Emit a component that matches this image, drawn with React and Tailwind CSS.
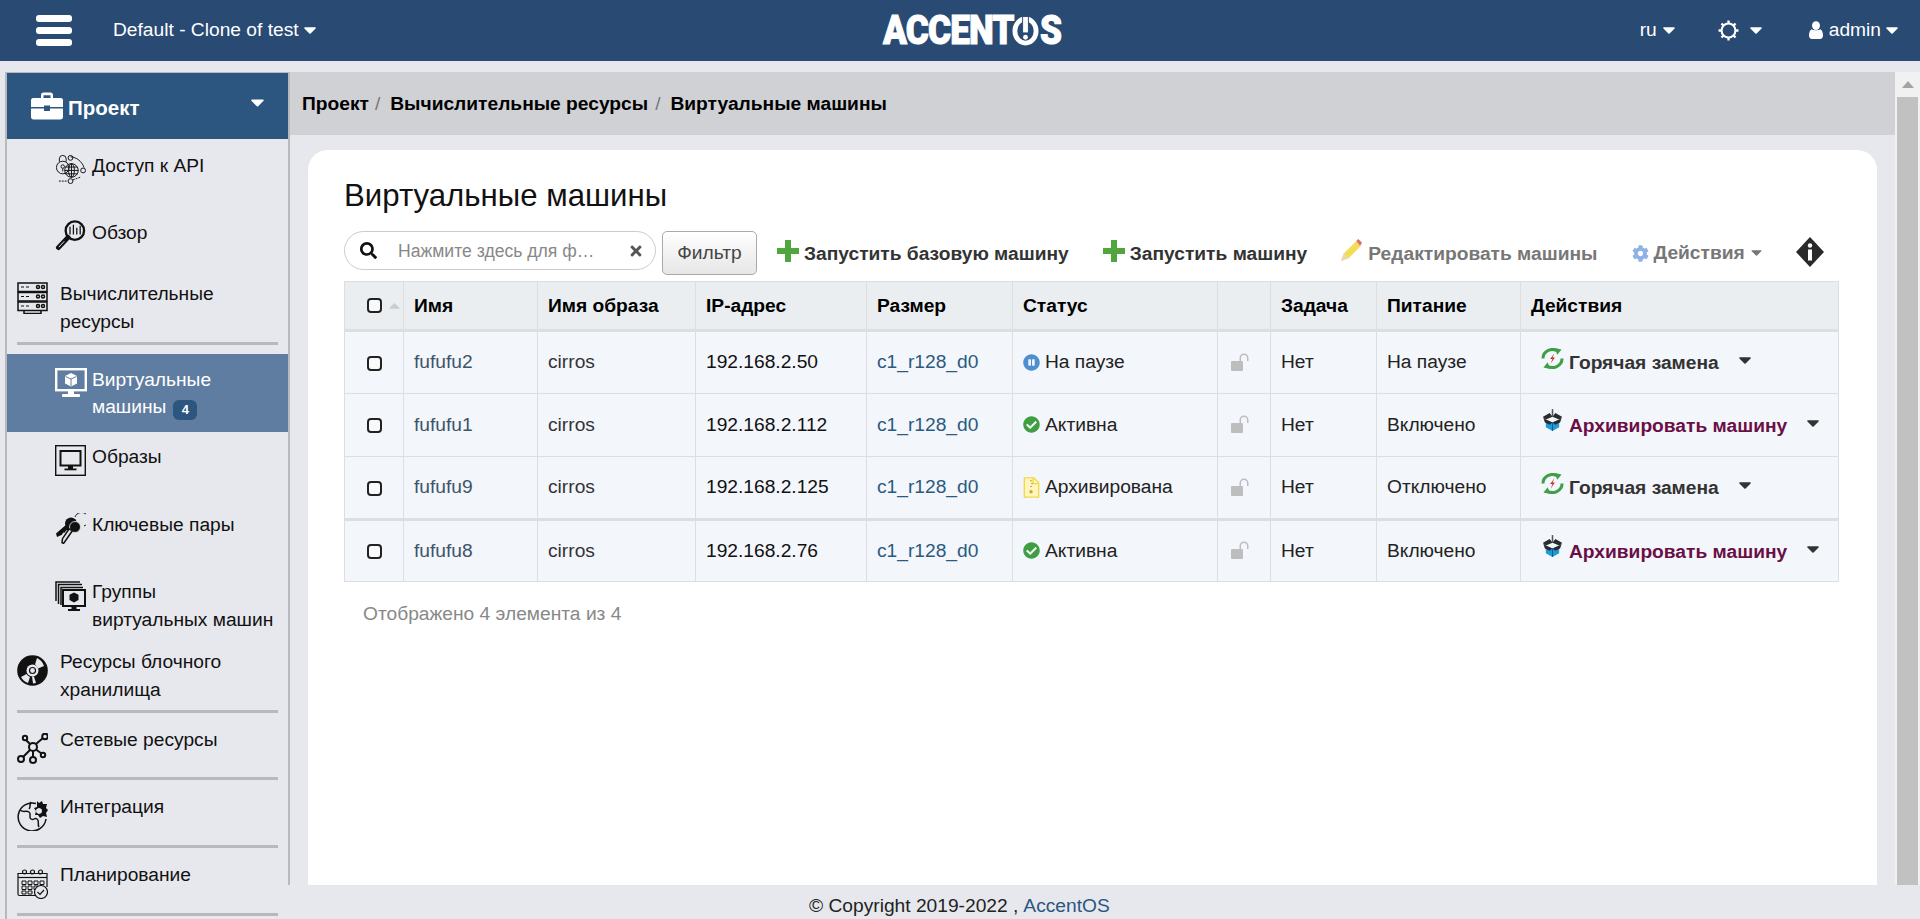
import React from "react";
import {
  FaSearch,
  FaTimes,
  FaCog,
  FaCheckCircle,
  FaPauseCircle,
} from "react-icons/fa";

const Caret = ({ className = "" }) => (
  <svg viewBox="0 0 12 7" className={className} fill="currentColor">
    <path d="M1 0.2h10c.8 0 1.1.8.6 1.3L6.6 6.5c-.3.3-.9.3-1.2 0L.4 1.5C-.1 1 .2.2 1 .2z" />
  </svg>
);

const HeaderGear = () => (
  <svg viewBox="0 0 20 20" className="w-[21px] h-[21px]" fill="none" stroke="white">
    <circle cx="10" cy="10" r="6.6" strokeWidth="2" />
    <g strokeWidth="2.2">
      <path d="M10 0.5v3M10 16.5v3M0.5 10h3M16.5 10h3M3.3 3.3l2 2M14.7 14.7l2 2M3.3 16.7l2-2M14.7 5.3l2-2" />
    </g>
  </svg>
);

const UserIcon = () => (
  <svg viewBox="0 0 14 18" className="w-[14px] h-[18px]" fill="white">
    <ellipse cx="7" cy="4.6" rx="4" ry="4.4" />
    <path d="M2.8 8.2C4 9.6 10 9.6 11.2 8.2 13 9 14 11 14 14.500c0 2-1.200 3.500-3 3.500H3c-1.800 0-3-1.500-3-3.500C0 11 1 9 2.800 8.200z" />
  </svg>
);

const Logo = () => (
  <div className="flex items-center w-[180px] h-[30px] text-white font-['Roboto',sans-serif] font-black text-[40px] leading-none tracking-[-1px] [-webkit-text-stroke:1px_white]">
    <span className="inline-block origin-left scale-x-[0.88] w-[129px] whitespace-nowrap">ACCENT</span>
    <svg viewBox="0 0 28 30" className="w-[27px] h-[30px] shrink-0" fill="none">
      <ellipse cx="14" cy="15" rx="11" ry="12.500" stroke="white" strokeWidth="5" />
      <rect x="11" y="0" width="6" height="17" fill="white" stroke="#284a73" strokeWidth="1" />
      <circle cx="14" cy="21.500" r="2.500" fill="white" />
    </svg>
    <span className="inline-block ml-[1px] origin-left scale-x-[0.88] w-[21px] whitespace-nowrap">S</span>
  </div>
);

const Briefcase = () => (
  <svg viewBox="0 0 32 28" className="w-[32px] h-[28px]" fill="white">
    <path d="M10 6V3c0-1.500 1-2.500 2.500-2.500h7C21 .5 22 1.500 22 3v3h-2.500V3.200h-7V6z" />
    <path d="M2 6h28c1 0 2 1 2 2v7H19v-1.500h-6V15H0V8c0-1 1-2 2-2z" />
    <path d="M0 16.500h13V19h6v-2.500h13V25c0 1.500-1 2.500-2.500 2.500h-27C1 27.500 0 26.500 0 25z" />
  </svg>
);

const ApiIcon = () => (
  <svg viewBox="0 0 32 32" className="w-[31px] h-[31px]" fill="none" stroke="#111" strokeWidth="1">
    <circle cx="8" cy="15" r="6.500" />
    <path d="M4.500 9V6a3.500 3.500 0 0 1 7 0v3" />
    <circle cx="8" cy="14" r="1.800" />
    <path d="M8 16v3" />
    <circle cx="17" cy="18" r="7" />
    <ellipse cx="17" cy="18" rx="3" ry="7" />
    <path d="M10 18h14M11 14.500h12M11 21.500h12M17 11v14" />
    <path d="M16 4c6 0 12 5 14 11" />
    <circle cx="16" cy="5" r="2.500" />
    <circle cx="29" cy="18" r="2.500" />
    <circle cx="16" cy="29" r="2.500" />
    <path d="M4 29h9M26 25l-8 3" strokeDasharray="2 1" />
  </svg>
);

const ReviewIcon = () => (
  <svg viewBox="0 0 31 32" className="w-[31px] h-[31px]" fill="none" stroke="#111">
    <circle cx="20" cy="11" r="9.500" strokeWidth="2.400" />
    <path d="M15 7v8M18.500 5v10M22 8v7M25.500 6v9" strokeWidth="1.300" />
    <path d="M13 18L3 28.500" strokeWidth="5" strokeLinecap="round" />
    <path d="M9 22L3.500 28" stroke="#e7e8ed" strokeWidth="1" />
  </svg>
);

const ServerIcon = () => (
  <svg viewBox="0 0 31 32" className="w-[31px] h-[32px]" fill="none" stroke="#111" strokeWidth="1.500">
    <rect x="1" y="1" width="29" height="8.500" />
    <rect x="1" y="10.500" width="29" height="8.500" />
    <rect x="1" y="20" width="29" height="8.500" />
    <path d="M4 5h3M9 5h3M4 14.500h3M9 14.500h3M4 24h3M9 24h3" strokeWidth="1" />
    <circle cx="21" cy="5" r="1.500" />
    <circle cx="26" cy="5" r="1.500" />
    <circle cx="21" cy="14.500" r="1.500" />
    <circle cx="26" cy="14.500" r="1.500" />
    <circle cx="21" cy="24" r="1.500" />
    <circle cx="26" cy="24" r="1.500" />
    <path d="M7 28.500v3h17v-3" />
  </svg>
);

const VmIcon = () => (
  <svg viewBox="0 0 32 30" className="w-[32px] h-[30px]" fill="none">
    <rect x="1.200" y="1.200" width="29.600" height="21" stroke="white" strokeWidth="2.400" />
    <path d="M16 5l6 3v7.500l-6 3-6-3V8z" fill="white" />
    <path d="M10.500 8.500L16 11l5.500-2.500M16 11v7" stroke="#5f7da0" strokeWidth="1" />
    <rect x="13" y="23" width="6" height="3" fill="white" />
    <rect x="7" y="26" width="18" height="3" rx="1" fill="white" />
  </svg>
);

const ImageIcon = () => (
  <svg viewBox="0 0 31 31" className="w-[31px] h-[31px]" fill="none" stroke="#111">
    <rect x=".7" y=".7" width="29.600" height="29.600" strokeWidth="1.400" />
    <rect x="5.500" y="6" width="20" height="14.500" strokeWidth="2" />
    <rect x="13.500" y="20.500" width="4" height="3" fill="#111" />
    <rect x="9.500" y="23.500" width="12" height="1.800" fill="#111" stroke="none" />
  </svg>
);

const KeysIcon = () => (
  <svg viewBox="0 0 31 31" className="w-[31px] h-[31px]" fill="none" stroke="#111">
    <path d="M20 4a7 7 0 1 1 9 9" strokeWidth="1" />
    <path d="M1 20.500L12 11l5 4-4 2-2 .5-1 2-2 .2-1 2-5 2.300z" fill="#111" stroke="none" />
    <circle cx="16" cy="10.500" r="6" fill="#111" stroke="none" />
    <circle cx="20" cy="14" r="5.500" fill="#111" stroke="#e7e8ed" strokeWidth=".8" />
    <path d="M17.500 17.500L11 27l-2.500 3.500-1.500-.8 .5-4L14 16z" fill="#e7e8ed" strokeWidth="1.500" />
  </svg>
);

const GroupIcon = () => (
  <svg viewBox="0 0 31 31" className="w-[31px] h-[31px]" fill="none" stroke="#111">
    <path d="M25 1H1v19" strokeWidth="1.500" />
    <path d="M27 3.500H3.500V23" strokeWidth="1.500" />
    <path d="M28 6.500H6V24" strokeWidth="1.500" />
    <rect x="8" y="9" width="22" height="16" strokeWidth="2" fill="#e7e8ed" />
    <path d="M19 11.500l4.500 2.200v5.300L19 21.500 14.500 19v-5.300z" fill="#111" stroke="none" />
    <rect x="17" y="25" width="4" height="3" fill="#111" />
    <rect x="13" y="28" width="12" height="2" fill="#111" stroke="none" />
  </svg>
);

const DiskIcon = () => (
  <svg viewBox="0 0 31 31" className="w-[31px] h-[31px]">
    <circle cx="15.500" cy="15.500" r="15.300" fill="#111" />
    <path d="M20 3a13 13 0 0 1 7 8l-6 2.500a7 7 0 0 0-3-4zM11 28a13 13 0 0 1-7-6l5.500-3a7 7 0 0 0 3.500 3z" fill="#e7e8ed" />
    <path d="M16 28.500a13 13 0 0 0 3-.5l-2-6.500h-2z" fill="#e7e8ed" />
    <circle cx="15.500" cy="15.500" r="6" fill="#e7e8ed" />
    <circle cx="15.500" cy="15.500" r="3" fill="none" stroke="#111" strokeWidth="1.200" />
  </svg>
);

const NetIcon = () => (
  <svg viewBox="0 0 31 31" className="w-[31px] h-[31px]" fill="none" stroke="#111" strokeWidth="2">
    <circle cx="16" cy="14" r="4" />
    <circle cx="8" cy="5" r="2.200" />
    <circle cx="28" cy="3.500" r="2.800" />
    <circle cx="4" cy="26" r="3" />
    <circle cx="16" cy="27" r="3" />
    <circle cx="26" cy="22" r="2.200" />
    <path d="M9 7l4.500 4.500M19 11l7-6M13 17l-7 7M16 18v6M19 16.500l5.500 4" />
  </svg>
);

const PuzzleIcon = () => (
  <svg viewBox="0 0 31 31" className="w-[31px] h-[31px]" fill="none" stroke="#111" strokeWidth="1.500">
    <path d="M19 3.500A14 14 0 1 0 29 19" />
    <path d="M3 10c4 3 6 0 9 2s-1 5 2 7 3-2 6 0 0 5 2 8" />
    <path d="M14 2c-2 3 0 5-2 7" />
    <path d="M20 1l2 2 3-2 1 3 4 0-1 4 2 2-2 3 1 4-4-1-3 2-2-3-3 0 1-4-2-3 3-1z" fill="#111" stroke="none" />
    <path d="M22 8a3 3 0 1 0 .1 0z" fill="#e7e8ed" stroke="none" />
  </svg>
);

const CalendarIcon = () => (
  <svg viewBox="0 0 31 31" className="w-[31px] h-[31px]" fill="none" stroke="#111" strokeWidth="1.200">
    <path d="M20 27.500H2.500A1.500 1.500 0 0 1 1 26V5.500h29V19" />
    <path d="M1 9.500h29" />
    <circle cx="7.500" cy="4" r="2" />
    <circle cx="15.500" cy="4" r="2" />
    <circle cx="23.500" cy="4" r="2" />
    <path d="M5 13h4v3.500H5zM11 13h4v3.500h-4zM17 13h4v3.500h-4zM23 13h4v3.500h-4zM5 18h4v3.500H5zM11 18h4v3.500h-4zM17 18h4v3.500h-4zM5 23h4v3H5zM11 23h4v3h-4z" strokeWidth="1" />
    <circle cx="24" cy="24" r="6.500" fill="#e7e8ed" />
    <path d="M20.500 24l2.500 2.500 4-4.500" />
  </svg>
);

const Pencil = () => (
  <svg viewBox="0 0 24 24" className="w-[23px] h-[23px]">
    <path d="M1 23l3-8L17 2l5 5L9 20z" fill="#f4dc57" />
    <path d="M1 23l3-8 5 5z" fill="#e9d7b0" />
    <path d="M17 2l2-2 4 4-2 3z" fill="#d9706b" />
  </svg>
);

const Plus = () => (
  <svg viewBox="0 0 22 22" className="w-[22px] h-[22px] mb-[5px]" fill="#4fa63c">
    <path d="M8 0h6v8h8v6h-8v8H8v-8H0V8h8z" />
  </svg>
);

const InfoDiamond = () => (
  <svg viewBox="0 0 30 30" className="w-[30px] h-[30px]">
    <path d="M15 0l14 15-14 15L1 15z" fill="#2a2a2a" />
    <circle cx="15" cy="8.500" r="2.200" fill="white" />
    <rect x="13" y="12.500" width="4" height="11" fill="white" />
  </svg>
);

const FileZip = () => (
  <svg viewBox="0 0 17 22" className="w-[17px] h-[21px]" fill="#fff5bf" stroke="#f4d84a" strokeWidth="1.400">
    <path d="M1 1h10l5 5v15H1z" />
    <path d="M10 1v6h6" fill="none" />
    <path d="M7 4h2M8 7h2M7 10h2" stroke="#b9a53c" strokeWidth="1" />
    <circle cx="8" cy="15.500" r="1.800" fill="#d4a91f" stroke="none" />
  </svg>
);

const HotSwap = () => (
  <svg viewBox="0 0 24 22" className="w-[23px] h-[21px]" fill="none">
    <path d="M2 11a10 9.500 0 0 1 16-7.500" stroke="#3f9e48" strokeWidth="3.200" />
    <path d="M14.500 0l7 1.500-4.500 5.500z" fill="#3f9e48" />
    <path d="M22 11a10 9.500 0 0 1-16 7.500" stroke="#3f9e48" strokeWidth="3.200" />
    <path d="M9.500 22l-7-1.500 4.500-5.500z" fill="#3f9e48" />
    <path d="M14 5.500l-4.500 6h2.500L10 16.500l4.500-6.500h-2.500z" fill="#c2332f" />
  </svg>
);

const ArchiveBox = () => (
  <svg viewBox="0 0 20 23" className="w-[19px] h-[22px]">
    <rect x="9.200" y="0" width="1.600" height="8" fill="#555" />
    <path d="M3 11l7 3 7-3v8l-7 4-7-4z" fill="#1e9ad6" />
    <path d="M10 14v9" stroke="#0e5a85" strokeWidth="1" />
    <path d="M0 8l7-4 3 4 3-4 7 4-3 3-7-3-7 3z" fill="#2b2b2b" />
    <path d="M0 8l3 3 7 3-3 2.500-5-2.500z" fill="#2b2b2b" />
    <path d="M20 8l-3 3-7 3 3 2.500 5-2.500z" fill="#2b2b2b" />
  </svg>
);

const Check = () => (
  <span className="inline-block w-[15px] h-[15px] rounded-[4px] border-2 border-[#222] bg-[#f8f9fb] align-middle" />
);

const Divider = () => <div className="h-[3px] mx-[10px] bg-[#b9b9bc]" />;

const TopItem = ({ icon, className = "", textClass = "", children }) => (
  <div className={"flex pl-[10px] gap-[12px] text-[19.2px] leading-[28px] text-[#111] " + className}>
    <div className="w-[31px] shrink-0 pt-[7px]">{icon}</div>
    <div className={textClass}>{children}</div>
  </div>
);

const SubItem = ({ icon, className = "", iconClass = "pt-[1px]", children }) => (
  <div className={"flex pl-[48px] gap-[6px] text-[19.2px] leading-[28px] text-[#111] " + className}>
    <div className={"w-[31px] shrink-0 " + iconClass}>{icon}</div>
    <div>{children}</div>
  </div>
);

const Sidebar = () => (
  <aside className="w-[283px] ml-[5px] shrink-0 border-l-2 border-[#b9b9bc] overflow-hidden">
    <div className="h-[67px] bg-[#2c5580] border-t-[1px] border-[#b9b9bc] flex items-center pl-[24px] pr-[24px] text-white">
      <Briefcase />
      <span className="ml-[5px] mt-[5px] font-bold text-[20.500px]">Проект</span>
      <Caret className="w-[13px] h-[8px] ml-auto mb-[6px]" />
    </div>
    <SubItem icon={<ApiIcon />} className="h-[67px] pt-[13px]">Доступ к API</SubItem>
    <SubItem icon={<ReviewIcon />} className="h-[69px] pt-[13px]">Обзор</SubItem>
    <TopItem icon={<ServerIcon />} className="h-[67px]" textClass="pt-[5px]">
      Вычислительные
      <br />
      ресурсы
    </TopItem>
    <Divider />
    <div className="h-[9px]" />
    <div className="h-[78px] bg-[#5f7da0] text-white flex pl-[48px] gap-[5px] pt-[12px] text-[19.2px] leading-[27px]">
      <div className="w-[32px] shrink-0 pt-[2px]">
        <VmIcon />
      </div>
      <div>
        Виртуальные
        <br />
        машины
        <span className="inline-flex items-center justify-center ml-[7px] w-[24px] h-[20px] rounded-[6px] bg-[#2c5580] text-[13px] font-bold align-[-1px] leading-none">
          4
        </span>
      </div>
    </div>
    <SubItem icon={<ImageIcon />} className="h-[68px] pt-[11px]" iconClass="pt-[2px]">Образы</SubItem>
    <SubItem icon={<KeysIcon />} className="h-[68px] pt-[11px]" iconClass="pt-[2px]">Ключевые пары</SubItem>
    <SubItem icon={<GroupIcon />} className="h-[80px] pt-[10px]" iconClass="pt-[3px]">
      Группы
      <br />
      виртуальных машин
    </SubItem>
    <TopItem icon={<DiskIcon />} className="h-[62px]">
      Ресурсы блочного
      <br />
      хранилища
    </TopItem>
    <Divider />
    <TopItem icon={<NetIcon />} className="h-[64px] pt-[13px]">Сетевые ресурсы</TopItem>
    <Divider />
    <TopItem icon={<PuzzleIcon />} className="h-[65px] pt-[13px]">Интеграция</TopItem>
    <Divider />
    <TopItem icon={<CalendarIcon />} className="h-[65px] pt-[13px]">Планирование</TopItem>
    <Divider />
  </aside>
);

const rows = [
  { name: "fufufu2", ip: "192.168.2.50", status: "pause", statusText: "На паузе", power: "На паузе", action: "swap" },
  { name: "fufufu1", ip: "192.168.2.112", status: "active", statusText: "Активна", power: "Включено", action: "archive" },
  { name: "fufufu9", ip: "192.168.2.125", status: "zip", statusText: "Архивирована", power: "Отключено", action: "swap" },
  { name: "fufufu8", ip: "192.168.2.76", status: "active", statusText: "Активна", power: "Включено", action: "archive" },
];

const StatusIcon = ({ status }) => {
  if (status === "pause") return <FaPauseCircle className="w-[17px] h-[17px] text-[#4d8fd1]" />;
  if (status === "active") return <FaCheckCircle className="w-[17px] h-[17px] text-[#3f9e3f]" />;
  return <FileZip />;
};

const th = "border border-[#dcdee1] border-b-[3px] px-[10px] pt-[2px] text-left font-bold text-black";
const td = "border border-[#dcdee1] px-[10px]";

const VmTable = () => (
  <table className="table-fixed border-collapse w-[1494px] text-[19.2px] text-[#222]">
    <colgroup>
      <col className="w-[59px]" />
      <col className="w-[134px]" />
      <col className="w-[158px]" />
      <col className="w-[171px]" />
      <col className="w-[146px]" />
      <col className="w-[205px]" />
      <col className="w-[53px]" />
      <col className="w-[106px]" />
      <col className="w-[144px]" />
      <col className="w-[318px]" />
    </colgroup>
    <thead>
      <tr className="h-[49px] bg-[#ebeef1]">
        <th className="border border-[#dcdee1] border-b-[3px] pl-[22px] text-left">
          <div className="flex items-center">
            <Check />
            <Caret className="w-[11px] h-[6px] ml-[7px] rotate-180 text-[#ccc]" />
          </div>
        </th>
        <th className={th}>Имя</th>
        <th className={th}>Имя образа</th>
        <th className={th}>IP-адрес</th>
        <th className={th}>Размер</th>
        <th className={th}>Статус</th>
        <th className={th}></th>
        <th className={th}>Задача</th>
        <th className={th}>Питание</th>
        <th className={th}>Действия</th>
      </tr>
    </thead>
    <tbody>
      {rows.map((r, i) => (
        <tr key={r.name} className={i === 3 ? "h-[62px] bg-[#f3f6fb] border-t-[3px] border-[#dcdee1]" : "h-[63px] bg-[#f3f6fb]"}>
          <td className="border border-[#dcdee1] pl-[22px]">
            <Check />
          </td>
          <td className={td + " text-[#3d5469]"}>{r.name}</td>
          <td className={td + " text-[#333]"}>cirros</td>
          <td className={td + " text-[#111]"}>{r.ip}</td>
          <td className={td + " text-[#2b5a80]"}>c1_r128_d0</td>
          <td className={td}>
            <div className="flex items-center gap-[5px]">
              <StatusIcon status={r.status} />
              <span>{r.statusText}</span>
            </div>
          </td>
          <td className={td + " pl-[13px]"}>
            <svg viewBox="0 0 18 18" className="w-[18px] h-[18px] mb-[2px]" fill="#bdbdbd">
              <rect x="0" y="8" width="12" height="10" rx="1" />
              <path d="M8.500 8V5a4.500 4.500 0 0 1 9 0v3h-1.500V5a3 3 0 0 0-6 0v3z" />
            </svg>
          </td>
          <td className={td}>Нет</td>
          <td className={td}>{r.power}</td>
          <td className="border border-[#dcdee1] pl-[20px]">
            {r.action === "swap" ? (
              <div className="flex items-center">
                <div className="w-[23px] mb-[8px]">
                  <HotSwap />
                </div>
                <span className="ml-[5px] font-bold text-[#333] mt-[2px] whitespace-nowrap">Горячая замена</span>
                <Caret className="w-[12px] h-[7px] ml-[20px] mb-[3px] text-[#333]" />
              </div>
            ) : (
              <div className="flex items-center">
                <div className="w-[23px] pl-[2px] mb-[10px]">
                  <ArchiveBox />
                </div>
                <span className="ml-[5px] font-bold text-[#6a0f46] mt-[2px] whitespace-nowrap">Архивировать машину</span>
                <Caret className="w-[12px] h-[7px] ml-[20px] mb-[3px] text-[#333]" />
              </div>
            )}
          </td>
        </tr>
      ))}
    </tbody>
  </table>
);

const Toolbar = () => (
  <div className="flex items-start h-[50px] text-[19.2px]">
    <div className="w-[312px] h-[39px] flex items-center rounded-full border border-[#ccc] bg-white pl-[15px] pr-[11px]">
      <FaSearch className="w-[17px] h-[17px] text-[#111] shrink-0" />
      <span className="ml-[21px] pt-[1px] flex-1 text-[17.6px] text-[#888] whitespace-nowrap">Нажмите здесь для ф…</span>
      <FaTimes className="w-[16px] h-[16px] text-[#555] shrink-0" />
    </div>
    <div className="ml-[6px] w-[95px] h-[44px] flex items-center justify-center rounded-[5px] border border-[#aaa] bg-gradient-to-b from-white to-[#e6e6e6] text-[#444]">
      Фильтр
    </div>
    <div className="ml-[20px] mt-[7px] flex items-center h-[30px] font-bold text-[#333]">
      <Plus />
      <span className="ml-[5px] mt-[2px] whitespace-nowrap">Запустить базовую машину</span>
    </div>
    <div className="ml-[34px] mt-[7px] flex items-center h-[30px] font-bold text-[#333]">
      <Plus />
      <span className="ml-[5px] mt-[2px] whitespace-nowrap">Запустить машину</span>
    </div>
    <div className="ml-[33px] mt-[7px] flex items-center h-[30px] font-bold text-[#777]">
      <div className="mb-[5px]">
        <Pencil />
      </div>
      <span className="ml-[5px] mt-[2px] whitespace-nowrap">Редактировать машины</span>
    </div>
    <div className="ml-[34px] mt-[7px] flex items-center h-[30px] font-bold text-[#777]">
      <FaCog className="w-[17px] h-[17px] text-[#8fb2e6]" />
      <span className="ml-[5px] whitespace-nowrap">Действия</span>
      <Caret className="w-[11px] h-[6px] ml-[6px]" />
    </div>
    <div className="ml-[33px] mt-[6px]">
      <InfoDiamond />
    </div>
  </div>
);

export default function App() {
  return (
    <div className="h-screen w-full overflow-hidden flex flex-col bg-[#e7e8ed] font-['Liberation_Sans',Arial,sans-serif]">
      <header className="h-[61px] shrink-0 bg-[#284a73] flex items-center text-white text-[19.2px]">
        <div className="ml-[36px] w-[36px] flex flex-col gap-[5px]">
          <div className="h-[7px] rounded-[3px] bg-white" />
          <div className="h-[7px] rounded-[3px] bg-white" />
          <div className="h-[7px] rounded-[3px] bg-white" />
        </div>
        <span className="ml-[41px] whitespace-nowrap">Default - Clone of test</span>
        <Caret className="w-[12px] h-[7px] ml-[5px]" />
        <div className="ml-[567px]">
          <Logo />
        </div>
        <div className="ml-auto flex items-center">
          <span>ru</span>
          <Caret className="w-[12px] h-[7px] ml-[6px]" />
          <div className="ml-[43px]">
            <HeaderGear />
          </div>
          <Caret className="w-[12px] h-[7px] ml-[11px]" />
          <div className="ml-[47px]">
            <UserIcon />
          </div>
          <span className="ml-[6px]">admin</span>
          <Caret className="w-[12px] h-[7px] ml-[5px] mr-[22px]" />
        </div>
      </header>
      <div className="flex-1 min-h-0 pt-[11px] flex">
        <Sidebar />
        <main className="flex-1 min-w-0 flex flex-col">
          <div className="h-[813px] shrink-0 flex">
            <div className="flex-1 min-w-0 flex flex-col border-l-2 border-[#b9b9bc]">
              <div className="h-[63px] shrink-0 bg-[#d0d1d5] flex items-center pl-[12px] pt-[2px] font-bold text-[19.2px] text-black">
                <span>Проект</span>
                <span className="ml-[6px] font-normal text-[#777]">/</span>
                <span className="ml-[10px]">Вычислительные ресурсы</span>
                <span className="ml-[7px] font-normal text-[#777]">/</span>
                <span className="ml-[10px]">Виртуальные машины</span>
              </div>
              <div className="flex-1 min-h-0 pt-[15px] pl-[18px] pr-[18px]">
                <div className="h-full bg-white rounded-t-[20px] pl-[36px] pt-[27px]">
                  <h1 className="text-[31.2px] leading-[38px] text-[#111] h-[54px]">Виртуальные машины</h1>
                  <Toolbar />
                  <VmTable />
                  <p className="mt-[18px] ml-[19px] text-[19.2px] text-[#888]">Отображено 4 элемента из 4</p>
                </div>
              </div>
            </div>
            <div className="w-[25px] shrink-0 bg-[#f1f1f1] pl-[2px] pr-[2px] flex flex-col">
              <div className="h-[25px] flex items-center justify-center">
                <div className="w-0 h-0 border-x-[6px] border-x-transparent border-b-[7px] border-b-[#a3a3a3]" />
              </div>
              <div className="flex-1 bg-[#c1c1c1]" />
            </div>
          </div>
          <footer className="flex-1 flex items-center pl-[521px] pt-[7px] leading-[24px] text-[19.2px] text-[#222]">
            <span>© Copyright 2019-2022 , </span>
            <span className="ml-[5px] text-[#2c5580]">AccentOS</span>
          </footer>
        </main>
      </div>
    </div>
  );
}
